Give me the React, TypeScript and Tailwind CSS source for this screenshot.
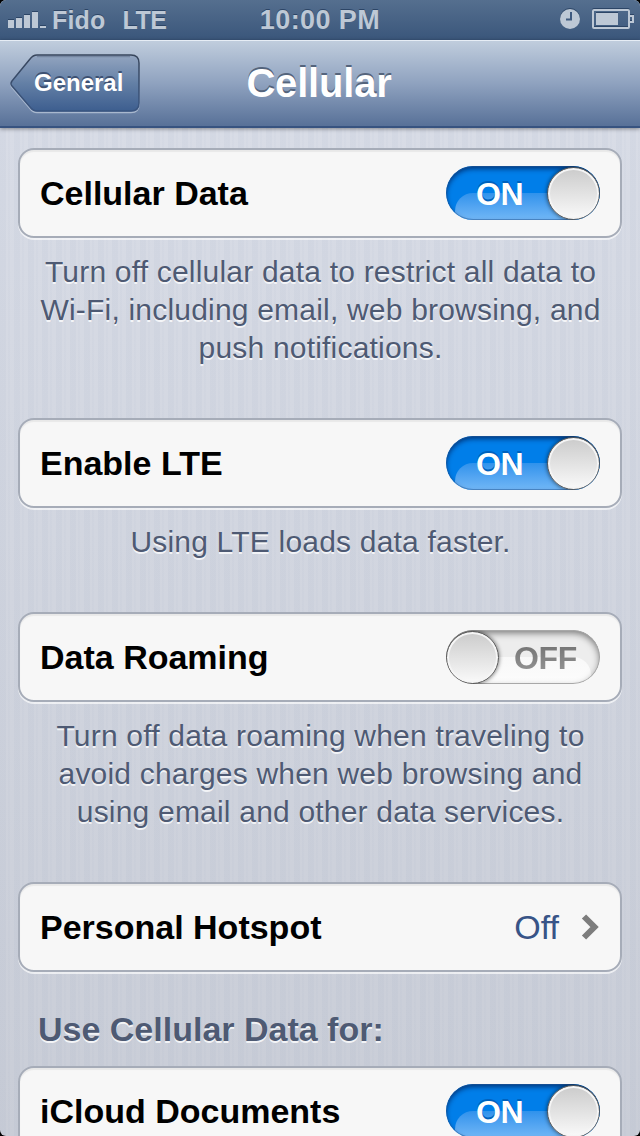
import React from "react";

function Signal() {
    return (
        <svg width="40" height="18" viewBox="0 0 40 18" className="block mt-0.5 fill-[#bdc8d5] drop-shadow-[0_-1px_0_#2c4566]">
            <path d="M0 8h6v8H0zM8 6h6v10H8zM16 3h6v13h-6zM24 0h6v16h-6zM32 14h6v2h-6z" />
        </svg>
    );
}

function Clock() {
    return (
        <svg width="20" height="20" viewBox="0 0 20 20" className="block -mt-0.5 drop-shadow-[0_-1px_0_#2c4566]">
            <circle cx="10" cy="10" r="10" fill="#bdc8d5" />
            <path d="M11 3v7.5H6" fill="none" stroke="#3f5a7f" strokeWidth="2" />
        </svg>
    );
}

function Battery() {
    return (
        <svg width="42" height="20" viewBox="0 0 42 20" className="block -mt-0.5 drop-shadow-[0_-1px_0_#2c4566]">
            <rect x="1" y="1" width="36" height="18" rx="1" fill="none" stroke="#bdc8d5" strokeWidth="2" />
            <path d="M4 4h22v12H4z" fill="#bdc8d5" />
            <path d="M38 7h3v6h-3" fill="none" stroke="#bdc8d5" strokeWidth="2" />
        </svg>
    );
}

function StatusBar() {
    return (
        <div className="grid grid-cols-3 items-center h-10 px-2 bg-gradient-to-b from-[#556f8f] to-[#3a567b] text-[#bdc8d5] text-[25px] leading-10 font-bold [text-shadow:0_-1px_0_#2c4566]">
            <div className="flex items-center">
                <Signal />
                <span className="ml-1 tracking-[0.2px]">Fido</span>
                <span className="ml-[17px] tracking-[-0.5px]">LTE</span>
            </div>
            <div className="text-center text-[27px] tracking-[0.4px]">10:00 PM</div>
            <div className="flex items-center justify-end gap-3 -mr-0.5">
                <Clock />
                <Battery />
            </div>
        </div>
    );
}

function BackButton({label}: {label: string})
{
    return (
        <button className="relative flex w-[132px] h-[60px] items-center">
            <svg width="132" height="60" viewBox="0 0 132 60" className="absolute inset-0">
                <defs>
                    <linearGradient id="back" x1="0" y1="0" x2="0" y2="1">
                        <stop offset="0" stopColor="#93a5c0" />
                        <stop offset="0.5" stopColor="#6480a6" />
                        <stop offset="1" stopColor="#3d5e8f" />
                    </linearGradient>
                    <linearGradient id="backEdge" x1="0" y1="0" x2="0" y2="1">
                        <stop offset="0" stopColor="#38465c" />
                        <stop offset="1" stopColor="#3a5580" />
                    </linearGradient>
                </defs>
                <path d="M29 1H123Q131 1 131 9V49Q131 57 123 57H29Q25 57 22 53L4 32Q2 29.500 4 27L22 5Q25 1 29 1Z" transform="translate(0 1.5)" fill="none" stroke="#a9b8ce" strokeWidth="1.500" />
                <path d="M29 1H123Q131 1 131 9V49Q131 57 123 57H29Q25 57 22 53L4 32Q2 29.500 4 27L22 5Q25 1 29 1Z" fill="url(#back)" stroke="url(#backEdge)" strokeWidth="1.500" />
                <path d="M29 2.500H122" stroke="#5b6b85" strokeWidth="1.500" opacity="0.500" />
            </svg>
            <span className="relative ml-[26px] -mt-0.5 text-white text-[24px] font-bold [text-shadow:0_-2px_0_#3d5172]">{label}</span>
        </button>
    );
}

function NavBar() {
    return (
        <div className="relative z-10 grid grid-cols-[132px_1fr_132px] items-center h-[88px] px-2 border-t border-b-2 border-t-[#e6edf5] border-b-[#375380] bg-gradient-to-b from-[#c0cddd] via-[#8fa2bf] to-[#587198] shadow-[0_1px_4px_rgba(0,0,0,0.4)]">
            <BackButton label="General" />
            <h1 className="-mt-0.5 -ml-0.5 text-center text-white text-[40px] leading-[50px] tracking-[-0.2px] font-bold [text-shadow:0_-2px_0_#54647c]">Cellular</h1>
        </div>
    );
}

function Toggle({on}: {on: boolean})
{
    return (
        <div className={`relative w-[154px] h-[54px] rounded-full overflow-hidden ${on ? "bg-[#007ee9]" : "bg-[#ededed]"}`}>
            <div className={`absolute top-[27px] h-[40px] w-[138px] rounded-t-[18px] ${on ? "left-[9px] bg-gradient-to-b from-[#2f92ec] to-[#8cc8fa]" : "left-[7px] bg-gradient-to-b from-[#f8f8f8] to-white"}`} />
            <div className={`absolute inset-0 rounded-full ${on ? "shadow-[inset_0_0_0_1px_rgba(40,90,150,0.5),inset_0_3px_5px_rgba(0,25,80,0.7)]" : "shadow-[inset_0_0_0_1px_#a8a8a8,inset_0_3px_7px_rgba(0,0,0,0.5)]"}`} />
            <span className={`absolute top-[3px] leading-[50px] text-[32px] font-bold ${on ? "left-[30px] text-white tracking-[-0.3px] [text-shadow:0_-2px_0_#0061bd]" : "left-[68px] bg-gradient-to-b from-[#686868] to-[#a0a0a0] bg-clip-text text-transparent tracking-[-0.3px]"}`}>
                {on ? "ON" : "OFF"}
            </span>
            <div className={`absolute top-px size-[53px] rounded-full border border-[#555] bg-gradient-to-b from-[#cbcbcb] to-[#fafafa] shadow-[inset_0_0_0_2px_#f5f5f5,0_0_4px_rgba(0,0,0,0.6)] ${on ? "right-0" : "left-0"}`} />
        </div>
    );
}

function Row({label, children}: {label: string, children: React.ReactNode})
{
    return (
        <div className="flex items-center justify-between h-[90px] mx-[18px] px-5 rounded-[16px] border-2 border-[#a6acb8] bg-[#f7f7f7] shadow-[0_2px_0_rgba(255,255,255,0.65),inset_0_2px_1px_rgba(0,0,0,0.06)]">
            <span className="text-black text-[34px] font-bold">{label}</span>
            {children}
        </div>
    );
}

function Note({lines}: {lines: string[]})
{
    return (
        <p className="pt-[15px] pb-[51px] pl-px text-center text-[#4e5a73] text-[30px] leading-[38px] tracking-[0.2px] [text-shadow:0_2px_0_rgba(255,255,255,0.75)]">
            {lines.map((line) => (
                <span key={line} className="block whitespace-nowrap">{line}</span>
            ))}
        </p>
    );
}

//
export default function App()
{
    return (
        <div className="flex flex-col w-[640px] h-[1136px] overflow-hidden bg-black font-['Liberation_Sans',Arial,sans-serif]">
            <div className="flex flex-1 flex-col min-h-0 overflow-hidden rounded-[6px] bg-gradient-to-b from-[#dadee8] to-[#c9cdd7]">
                <StatusBar />
                <NavBar />
                <div className="flex-1 min-h-0 overflow-hidden pt-5 bg-[repeating-linear-gradient(90deg,rgba(120,140,175,0.05)_0px_6px,transparent_6px_8px,rgba(120,140,175,0.03)_8px_10px,transparent_10px_14px)]">
                    <Row label="Cellular Data">
                        <Toggle on={true} />
                    </Row>
                    <Note lines={["Turn off cellular data to restrict all data to", "Wi-Fi, including email, web browsing, and", "push notifications."]} />
                    <Row label="Enable LTE">
                        <Toggle on={true} />
                    </Row>
                    <Note lines={["Using LTE loads data faster."]} />
                    <Row label="Data Roaming">
                        <Toggle on={false} />
                    </Row>
                    <Note lines={["Turn off data roaming when traveling to", "avoid charges when web browsing and", "using email and other data services."]} />
                    <Row label="Personal Hotspot">
                        <div className="flex items-center gap-[21px]">
                            <span className="text-[#385487] text-[34px]">Off</span>
                            <svg width="20" height="26" viewBox="0 0 20 26" className="block">
                                <path d="M4 2.500L14.500 13L4 23.500" fill="none" stroke="#7d7d7d" strokeWidth="6" />
                            </svg>
                        </div>
                    </Row>
                    <h2 className="h-[94px] pt-9 pl-[38px] text-[#4e5a73] text-[34px] leading-[42px] font-bold [text-shadow:0_2px_0_rgba(255,255,255,0.8)]">Use Cellular Data for:</h2>
                    <Row label="iCloud Documents">
                        <Toggle on={true} />
                    </Row>
                </div>
            </div>
        </div>
    );
}
